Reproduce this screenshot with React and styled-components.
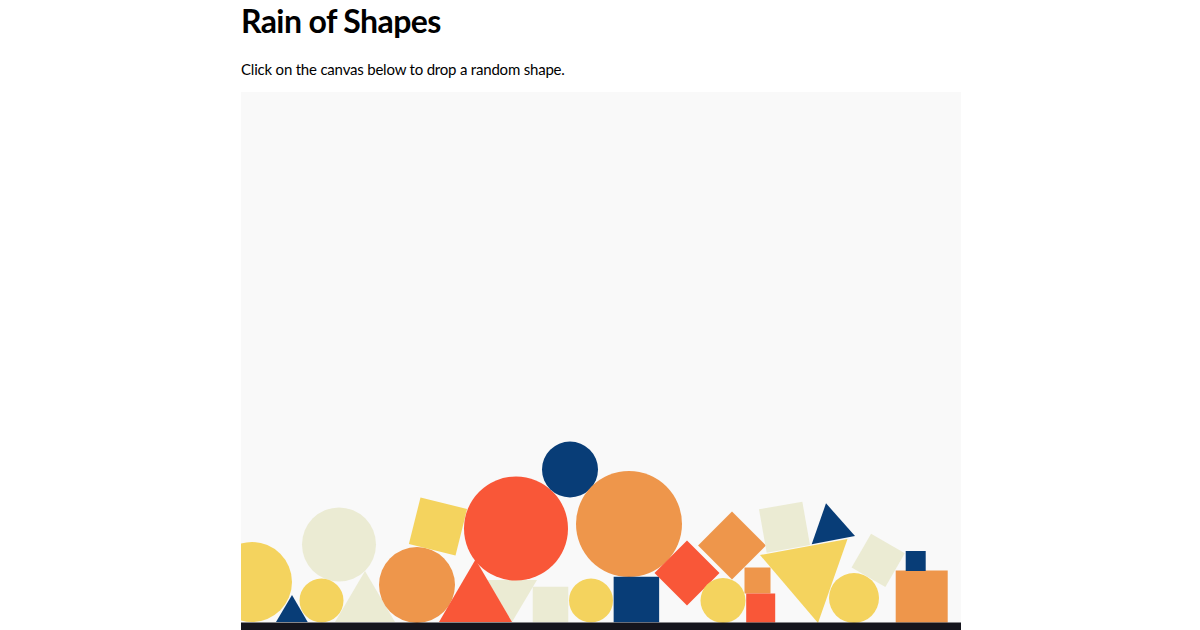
import React, { useState } from 'react';
import styled, { createGlobalStyle } from 'styled-components';

const palette = {
  navy: '#083D77',
  cream: '#EBEBD3',
  yellow: '#F4D35E',
  orange: '#EE964B',
  red: '#F95738',
};

// shapes already settled on the floor, in canvas coordinates
const initialShapes = [
  { type: 'triangle', color: 'navy', points: [[51, 503], [35, 530], [66.7, 530]] },
  { type: 'circle', color: 'yellow', x: 11, y: 490, r: 40 },
  { type: 'triangle', color: 'cream', points: [[124, 479], [94, 530], [154, 530]] },
  { type: 'circle', color: 'cream', x: 98, y: 452.5, r: 37 },
  { type: 'circle', color: 'yellow', x: 80.5, y: 508.5, r: 22 },
  { type: 'circle', color: 'orange', x: 176, y: 493, r: 38 },
  { type: 'square', color: 'yellow', x: 197, y: 434.5, size: 48, angle: 14 },
  { type: 'triangle', color: 'cream', points: [[246, 488], [296, 488], [271, 530]] },
  { type: 'circle', color: 'red', x: 275, y: 436.5, r: 52 },
  { type: 'triangle', color: 'red', points: [[234.5, 467.5], [198, 530], [271, 530]] },
  { type: 'square', color: 'cream', x: 309.5, y: 512.5, size: 35.5, angle: 0 },
  { type: 'circle', color: 'navy', x: 329, y: 377.5, r: 28 },
  { type: 'circle', color: 'yellow', x: 350, y: 508.5, r: 22 },
  { type: 'circle', color: 'orange', x: 388, y: 432, r: 53 },
  { type: 'square', color: 'navy', x: 395.4, y: 507.5, size: 45.5, angle: 0 },
  { type: 'square', color: 'red', x: 446, y: 481, size: 46, angle: 45 },
  { type: 'square', color: 'orange', x: 491, y: 453.5, size: 48, angle: 45 },
  { type: 'circle', color: 'yellow', x: 482, y: 508.5, r: 22.5 },
  { type: 'square', color: 'orange', x: 516.5, y: 488.5, size: 26, angle: 0 },
  { type: 'square', color: 'red', x: 519.7, y: 516, size: 29, angle: 0 },
  { type: 'square', color: 'cream', x: 543.5, y: 435.2, size: 44, angle: -10 },
  { type: 'triangle', color: 'yellow', points: [[519, 463], [606.5, 447], [577, 531]] },
  { type: 'triangle', color: 'navy', points: [[585, 411.3], [614, 444], [570.7, 452.3]] },
  { type: 'square', color: 'cream', x: 637.2, y: 468.4, size: 39, angle: 30 },
  { type: 'circle', color: 'yellow', x: 613, y: 506, r: 25 },
  { type: 'square', color: 'orange', x: 680.7, y: 504.5, size: 52, angle: 0 },
  { type: 'square', color: 'navy', x: 674.7, y: 469, size: 20, angle: 0 },
];

const kinds = ['circle', 'square', 'triangle'];
const colorNames = Object.keys(palette);

function randomShape(x, y) {
  const type = kinds[Math.floor(Math.random() * kinds.length)];
  const color = colorNames[Math.floor(Math.random() * colorNames.length)];
  const size = 20 + Math.random() * 40;
  if (type === 'circle') return { type, color, x, y, r: size / 2 };
  if (type === 'square') return { type, color, x, y, size, angle: Math.random() * 90 };
  const h = (size * Math.sqrt(3)) / 2;
  return {
    type,
    color,
    points: [[x, y - (2 * h) / 3], [x - size / 2, y + h / 3], [x + size / 2, y + h / 3]],
  };
}

function Shape({ shape }) {
  const fill = palette[shape.color];
  if (shape.type === 'circle') {
    return <circle cx={shape.x} cy={shape.y} r={shape.r} fill={fill} />;
  }
  if (shape.type === 'square') {
    const half = shape.size / 2;
    return (
      <rect
        x={shape.x - half}
        y={shape.y - half}
        width={shape.size}
        height={shape.size}
        fill={fill}
        transform={`rotate(${shape.angle} ${shape.x} ${shape.y})`}
      />
    );
  }
  return <polygon points={shape.points.map((p) => p.join(',')).join(' ')} fill={fill} />;
}

export default function App() {
  const [shapes, setShapes] = useState(initialShapes);

  function handleDrop(event) {
    const box = event.currentTarget.getBoundingClientRect();
    const x = event.clientX - box.left;
    const y = event.clientY - box.top;
    setShapes((list) => [...list, randomShape(x, y)]);
  }

  return (
    <>
      <GlobalStyle />
      <Page>
        <Title>Rain of Shapes</Title>
        <Intro>Click on the canvas below to drop a random shape.</Intro>
        <Canvas>
          <Scene width="720" height="540" viewBox="0 0 720 540" onClick={handleDrop}>
            {shapes.map((shape, i) => (
              <Shape key={i} shape={shape} />
            ))}
            <rect x="0" y="530.5" width="720" height="10" fill="#15151d" />
          </Scene>
        </Canvas>
      </Page>
    </>
  );
}

const GlobalStyle = createGlobalStyle`
  body {
    margin: 0;
    background: #ffffff;
    color: #000000;
    font-family: Lato, 'Noto Sans', sans-serif;
  }
`;

const Page = styled.main`
  width: 720px;
  margin: 0 auto;
  padding-left: 2px;
`;

const Title = styled.h1`
  margin: 0;
  padding-top: 1px;
  font-size: 32px;
  line-height: 40px;
  font-weight: 700;
  letter-spacing: -0.6px;
`;

const Intro = styled.p`
  margin: 16px 0 11px;
  font-size: 15px;
  line-height: 24px;
  letter-spacing: -0.2px;
`;

const Canvas = styled.div`
  width: 720px;
  height: 540px;
  background: #f9f9f9;
`;

const Scene = styled.svg`
  display: block;
  cursor: pointer;
`;
